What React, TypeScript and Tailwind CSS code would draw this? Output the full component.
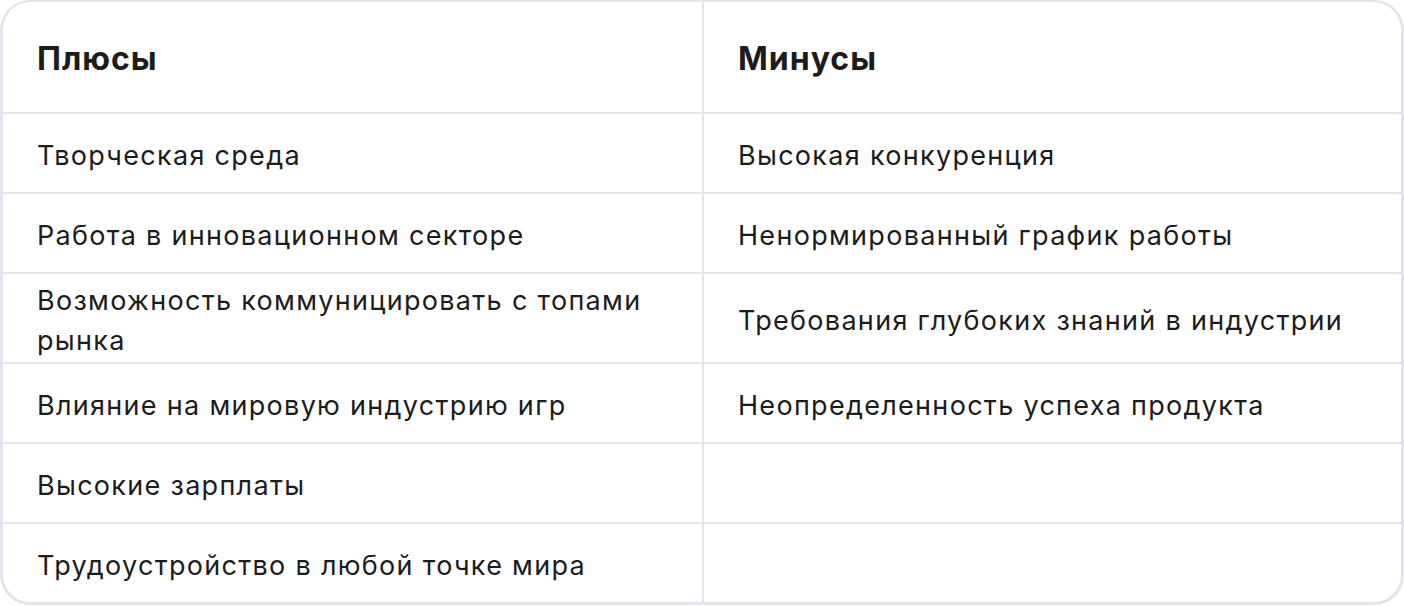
const rows: [string, string][] = [
  ['Творческая среда', 'Высокая конкуренция'],
  ['Работа в инновационном секторе', 'Ненормированный график работы'],
  ['Возможность коммуницировать с топами рынка', 'Требования глубоких знаний в индустрии'],
  ['Влияние на мировую индустрию игр', 'Неопределенность успеха продукта'],
  ['Высокие зарплаты', ''],
  ['Трудоустройство в любой точке мира', ''],
]

export default function App() {
  return (
    <div className="h-[606px] w-[1404px] bg-white font-['Inter',sans-serif] text-[#1c1c1c]">
      <div className="grid grid-cols-[701px_1fr] overflow-hidden rounded-[30px] border-[3px] border-t-2 border-[#e4e4ee]">
        <div className="flex h-[112px] items-center border-b-2 border-r-2 border-[#e4e4ee] px-[34px] pt-1 text-[32px] font-bold tracking-[1px]">
          Плюсы
        </div>
        <div className="flex h-[112px] items-center border-b-2 border-[#e4e4ee] px-[34px] pt-1 text-[32px] font-bold tracking-[1px]">
          Минусы
        </div>
        {rows.map(([plus, minus], i) => {
          const last = i === rows.length - 1
          return (
            <div key={i} className="contents">
              <div
                className={
                  'flex items-center border-r-2 border-[#e4e4ee] px-[34px] pt-[7px] pb-[1px] text-[27px] leading-[40px] tracking-[1.3px] ' +
                  (last ? 'min-h-[78px]' : 'min-h-[80px] border-b-2')
                }
              >
                {plus}
              </div>
              <div
                className={
                  'flex items-center border-[#e4e4ee] px-[34px] pt-[7px] pb-[1px] text-[27px] leading-[40px] tracking-[1.3px] ' +
                  (last ? 'min-h-[78px]' : 'min-h-[80px] border-b-2')
                }
              >
                {minus}
              </div>
            </div>
          )
        })}
      </div>
    </div>
  )
}
